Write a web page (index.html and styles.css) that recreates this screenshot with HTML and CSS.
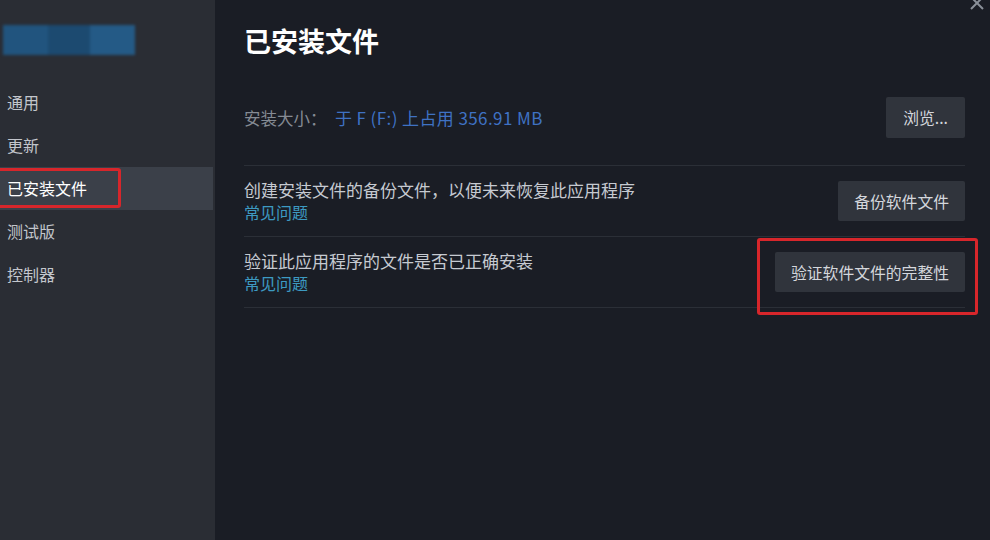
FILE: index.html
```html
<!DOCTYPE html>
<html lang="zh-CN">
<head>
    <meta charset="UTF-8">
    <meta name="viewport" content="width=device-width, initial-scale=1.0">
    <title>已安装文件</title>
    <link rel="stylesheet" href="styles.css">
</head>
<body>
    <div class="window">
        <div class="sidebar">
            <div class="app-logo">
                <span class="blk b1"></span>
                <span class="blk b2"></span>
                <span class="blk b3"></span>
            </div>
            <div class="nav">
                <a href="#">通用</a>
                <a href="#">更新</a>
                <a href="#" class="active">已安装文件<span class="mark"></span></a>
                <a href="#">测试版</a>
                <a href="#">控制器</a>
            </div>
        </div>
        <div class="main">
            <span class="close">
                <svg width="16" height="16" viewBox="0 0 16 16"><path d="M2 2 L14 14 M14 2 L2 14" stroke="#8a9099" stroke-width="2" fill="none"/></svg>
            </span>
            <h1>已安装文件</h1>
            <div class="size-row">
                <span class="label">安装大小：</span>
                <span class="value">于 F (F:) 上占用 356.91 MB</span>
                <button class="btn">浏览...</button>
            </div>
            <div class="row">
                <div class="desc">
                    <div class="line">创建安装文件的备份文件，以便未来恢复此应用程序</div>
                    <a href="#" class="line faq">常见问题</a>
                </div>
                <button class="btn">备份软件文件</button>
            </div>
            <div class="row">
                <div class="desc">
                    <div class="line">验证此应用程序的文件是否已正确安装</div>
                    <a href="#" class="line faq">常见问题</a>
                </div>
                <button class="btn verify">验证软件文件的完整性<span class="mark"></span></button>
            </div>
        </div>
    </div>
</body>
</html>
```

FILE: styles.css
```css
body {
    margin: 0;
    font-family: "Noto Sans CJK SC", "Noto Sans", Arial, sans-serif;
    background-color: #1a1d25;
    color: #c6cad1;
    overflow: hidden;
}
.window {
    display: flex;
    width: 990px;
    height: 540px;
}
.sidebar {
    width: 215px;
    flex-shrink: 0;
    background-color: #2a2d34;
    padding-top: 25px;
    box-sizing: border-box;
}
.app-logo {
    display: flex;
    width: 132px;
    height: 30px;
    margin-left: 3px;
    background-color: #1d4468;
    filter: blur(1.5px);
}
.blk {
    display: block;
    height: 100%;
}
.b1 {
    width: 45px;
    background-color: #21547e;
}
.b2 {
    width: 42px;
    background-color: #1c4a70;
}
.b3 {
    width: 45px;
    background-color: #245a86;
}
.nav {
    margin-top: 26px;
    padding-right: 2px;
}
.nav a {
    position: relative;
    display: block;
    height: 43px;
    line-height: 43px;
    padding-left: 7px;
    font-size: 16px;
    color: #c3c6cc;
    text-decoration: none;
}
.nav a.active {
    background-color: #3b4049;
    color: #ffffff;
}
.nav a .mark {
    position: absolute;
    left: -4px;
    top: 1px;
    width: 119px;
    height: 34px;
    border: 3px solid #d7262b;
    border-radius: 3px;
}
.main {
    position: relative;
    flex-grow: 1;
    padding: 23px 25px 0 29px;
}
.close {
    position: absolute;
    right: 5px;
    top: -8px;
}
h1 {
    margin: 0;
    font-size: 27px;
    line-height: 35px;
    font-weight: bold;
    color: #ffffff;
}
.size-row {
    display: flex;
    align-items: center;
    margin-top: 39px;
    padding-bottom: 27px;
    border-bottom: 1px solid #2b2f37;
    font-size: 16.5px;
}
.label {
    color: #858b94;
    width: 91px;
}
.value {
    color: #3f72c4;
    flex-grow: 1;
    font-size: 17px;
    letter-spacing: 0.4px;
}
.btn {
    position: relative;
    height: 40px;
    padding: 0 16px;
    border: none;
    border-radius: 2px;
    background-color: #30343c;
    color: #d4d7dc;
    font-family: inherit;
    font-size: 15.8px;
    cursor: pointer;
}
.size-row .btn {
    height: 41px;
    padding: 0 17px;
}
.row {
    display: flex;
    align-items: center;
    justify-content: space-between;
    height: 70px;
    border-bottom: 1px solid #2b2f37;
    font-size: 17px;
}
.line {
    display: block;
    height: 22px;
    line-height: 22px;
}
.faq {
    width: max-content;
    font-size: 16px;
    color: #3d9ac2;
    text-decoration: none;
}
.verify .mark {
    position: absolute;
    left: -18px;
    top: -14px;
    width: 215px;
    height: 71px;
    border: 3px solid #d7262b;
    border-radius: 3px;
}
```
